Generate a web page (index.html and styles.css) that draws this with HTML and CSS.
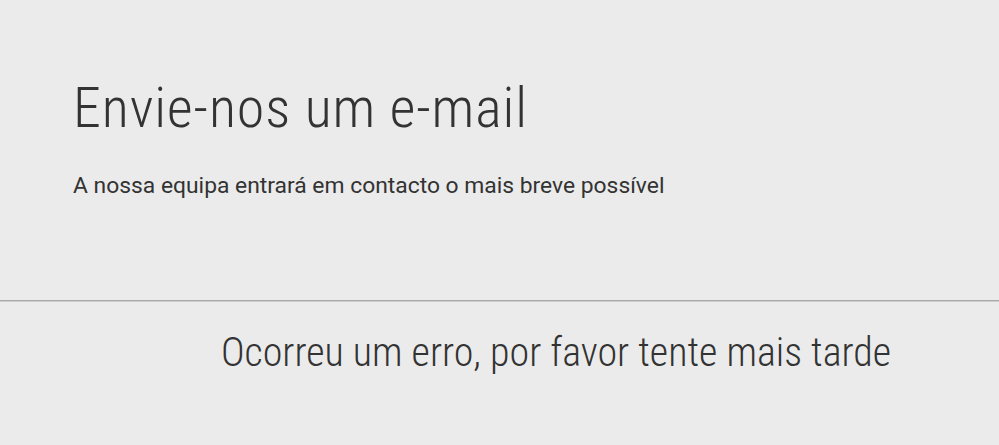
FILE: index.html
```html
<!DOCTYPE html>
<html lang="pt">
<head>
<meta charset="utf-8">
<link rel="stylesheet" href="styles.css">
</head>
<body>
<section class="intro">
  <h1 class="title">Envie-nos um e-mail</h1>
  <p class="subtitle">A nossa equipa entrará em contacto o mais breve possível</p>
</section>
<hr class="divider">
<section class="error">
  <p class="error-text">Ocorreu um erro, por favor tente mais tarde</p>
</section>
</body>
</html>
```

FILE: styles.css
```css
html, body {
  margin: 0;
  padding: 0;
  background: #ebebeb;
  color: #333333;
  font-family: "Roboto", "Open Sans", sans-serif;
  font-stretch: 75%;
  width: 999px;
  height: 445px;
  overflow: hidden;
}
.intro {
  padding: 76px 0 0 73px;
}
.title {
  margin: 0;
  font-weight: 300;
  font-size: 56px;
  letter-spacing: 0.9px;
  line-height: 64px;
}
.subtitle {
  margin: 32px 0 0;
  font-weight: 400;
  font-size: 22.85px;
  font-stretch: 100%;
  line-height: 28px;
}
.divider {
  margin: 100px 0 0;
  border: 0;
  border-top: 1px solid #a9a9a9;
  border-bottom: 1px solid #cdcdcd;
  height: 0;
}
.error {
  padding: 27px 0 0 221px;
}
.error-text {
  margin: 0;
  font-weight: 300;
  font-size: 40px;
  line-height: 48px;
}
```
